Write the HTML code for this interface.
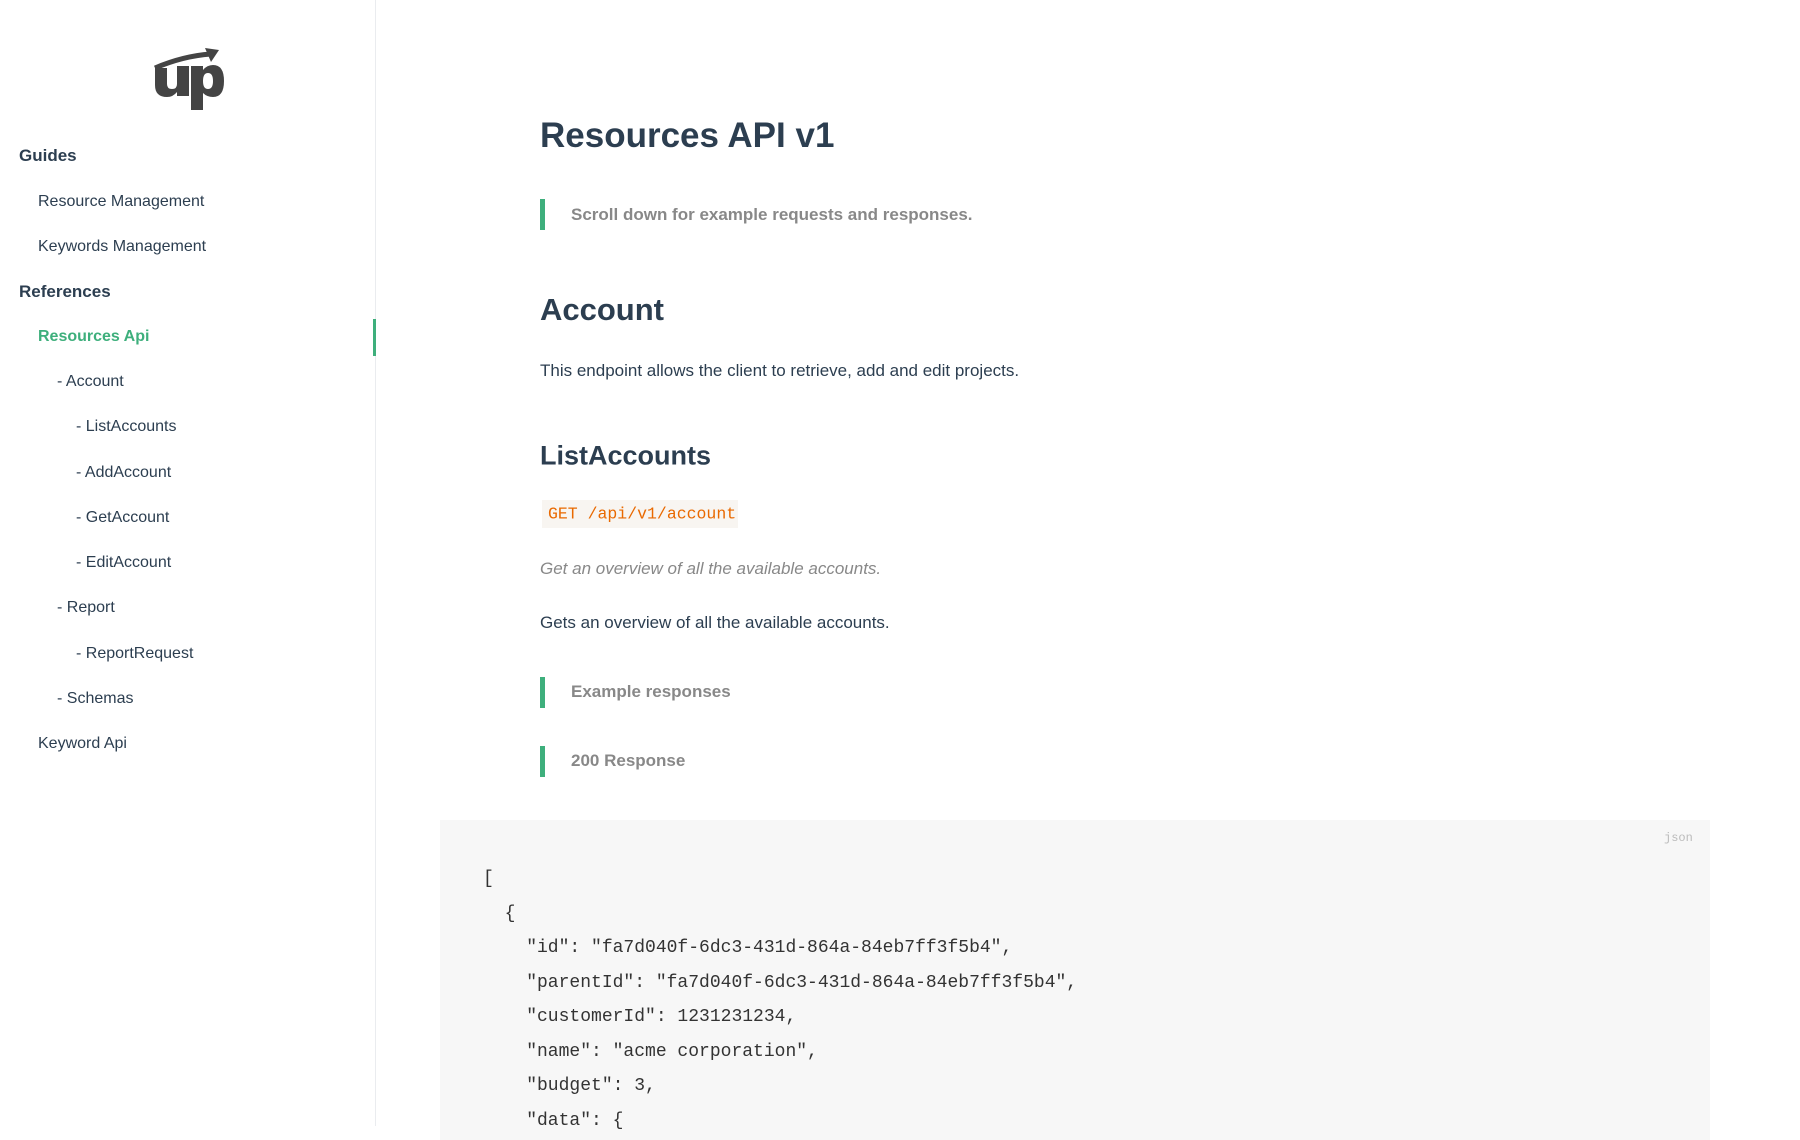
<!DOCTYPE html>
<html><head><meta charset="utf-8"><style>
*{margin:0;padding:0;box-sizing:border-box}
body{width:1800px;height:1126px;overflow:hidden;background:#fff;font-family:"Liberation Sans",sans-serif;color:#2c3e50;position:relative}
.sb{position:absolute;left:0;top:0;width:376px;height:1126px;border-right:1px solid #eaecef}
.sb a{position:absolute;font-size:16px;color:#2c3e50;white-space:nowrap;transform:translateY(-50%)}
.sb .h{font-weight:bold;font-size:17px;left:19px}
.sb .i1{left:38px}.sb .i2{left:57px}.sb .i3{left:76px}
.act{position:absolute;left:373px;top:319px;width:3px;height:37px;background:#3eaf7c}
.m{position:absolute;white-space:nowrap;transform:translateY(-50%)}
.bar{position:absolute;left:540px;width:5px;background:#3eaf7c}
.bq{left:571px;font-size:17px;font-weight:bold;color:#888}
pre{position:absolute;left:440px;top:820px;width:1270px;height:320px;background:#f7f7f7;font-family:"Liberation Mono",monospace;font-size:18px;line-height:34.5px;color:#333;padding:42px 0 0 43px}
</style></head><body>
<div class="sb">
<svg style="position:absolute;left:153px;top:48px" width="72" height="62" viewBox="0 0 72 62">
<path d="M2 20 Q30 8 58 6" stroke="#444" stroke-width="5" fill="none"/>
<path d="M52 0 L66 2 L58 14 Z" fill="#444"/>
<path d="M2 20 h12 v16 q0 5 5 5 q5 0 5-5 v-18 h12 v30 h-12 v-4 q-4 5 -10 5 q-12 0 -12-12 z" fill="#444"/>
<path d="M38 18 h12 v4 q4-5 10-5 q11 0 11 16 q0 16 -11 16 q-6 0 -10-4 v17 h-12 z M50 33 q0 8 5 8 q5 0 5-8 q0-8 -5-8 q-5 0 -5 8z" fill="#444" fill-rule="evenodd"/>
</svg>
<a class="h" style="top:156px">Guides</a>
<a class="i1" style="top:202px">Resource Management</a>
<a class="i1" style="top:247px">Keywords Management</a>
<a class="h" style="top:292px">References</a>
<a class="i1" style="top:337px;color:#3eaf7c;font-weight:bold">Resources Api</a>
<a class="i2" style="top:382px">- Account</a>
<a class="i3" style="top:427px">- ListAccounts</a>
<a class="i3" style="top:473px">- AddAccount</a>
<a class="i3" style="top:518px">- GetAccount</a>
<a class="i3" style="top:563px">- EditAccount</a>
<a class="i2" style="top:608px">- Report</a>
<a class="i3" style="top:654px">- ReportRequest</a>
<a class="i2" style="top:699px">- Schemas</a>
<a class="i1" style="top:744px">Keyword Api</a>
</div>
<div class="act"></div>
<div class="m" style="left:540px;top:136px;font-size:35px;font-weight:bold">Resources API v1</div>
<div class="bar" style="top:199px;height:31px"></div>
<div class="m bq" style="top:215px">Scroll down for example requests and responses.</div>
<div class="m" style="left:540px;top:310px;font-size:31px;font-weight:bold">Account</div>
<div class="m" style="left:540px;top:371px;font-size:17px">This endpoint allows the client to retrieve, add and edit projects.</div>
<div class="m" style="left:540px;top:456px;font-size:27px;font-weight:bold">ListAccounts</div>
<div style="position:absolute;left:542px;top:500px;width:196px;height:28px;background:#f8f5f1"></div>
<div class="m" style="left:548px;top:514px;font-family:'Liberation Mono',monospace;font-size:16.5px;color:#e96900">GET /api/v1/account</div>
<div class="m" style="left:540px;top:569px;font-size:17px;font-style:italic;color:#888">Get an overview of all the available accounts.</div>
<div class="m" style="left:540px;top:623px;font-size:17px">Gets an overview of all the available accounts.</div>
<div class="bar" style="top:677px;height:31px"></div>
<div class="m bq" style="top:692px">Example responses</div>
<div class="bar" style="top:746px;height:31px"></div>
<div class="m bq" style="top:761px">200 Response</div>
<pre>[
  {
    "id": "fa7d040f-6dc3-431d-864a-84eb7ff3f5b4",
    "parentId": "fa7d040f-6dc3-431d-864a-84eb7ff3f5b4",
    "customerId": 1231231234,
    "name": "acme corporation",
    "budget": 3,
    "data": {</pre>
<div class="m" style="left:1664px;top:838px;font-family:'Liberation Mono',monospace;font-size:12px;color:#bbb">json</div>
</body></html>
